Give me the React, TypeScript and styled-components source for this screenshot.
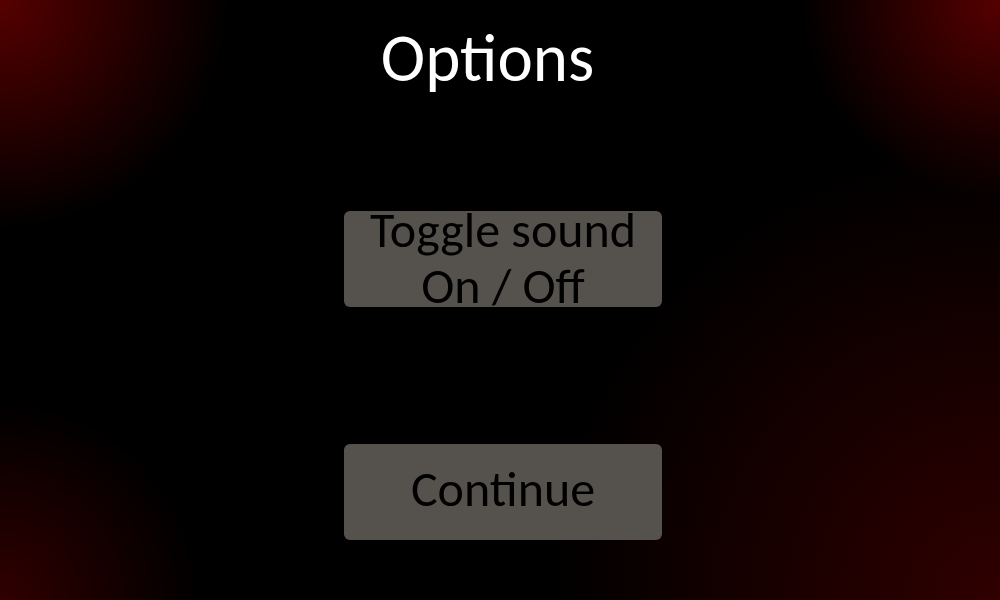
import React from 'react';
import styled, { createGlobalStyle } from 'styled-components';

const GlobalStyle = createGlobalStyle`
  html, body {
    margin: 0;
    padding: 0;
    height: 100%;
  }
  body {
    font-family: Carlito, Lato, "Open Sans", sans-serif;
  }
`;

const Screen = styled.div`
  width: 100vw;
  height: 100vh;
  overflow: hidden;
  background-color: #000;
  background-image:
    radial-gradient(circle at 0 0, #560000 0, rgba(86, 0, 0, 0) 230px),
    radial-gradient(circle at 100% 0, #560000 0, rgba(86, 0, 0, 0) 200px),
    radial-gradient(circle at 0 100%, #300000 0, rgba(48, 0, 0, 0) 200px),
    radial-gradient(circle at 100% 100%, #300000 0, rgba(48, 0, 0, 0) 460px);
  display: flex;
  flex-direction: column;
  align-items: center;
`;

const Title = styled.h1`
  margin: 20px 25px 0 0;
  font-size: 67px;
  font-weight: 400;
  line-height: 76px;
  color: #fff;
`;

const Menu = styled.div`
  margin-top: 115px;
  margin-left: 6px;
  display: flex;
  flex-direction: column;
  gap: 137px;
`;

const MenuButton = styled.button<{ $lift: number }>`
  box-sizing: border-box;
  width: 318px;
  height: 96px;
  border: none;
  border-radius: 6px;
  background: #55524d;
  color: #000;
  font-family: inherit;
  font-size: 50px;
  line-height: 56px;
  padding: 0 0 ${(p) => p.$lift}px;
  display: flex;
  align-items: center;
  justify-content: center;
  text-align: center;
  cursor: pointer;
  overflow: visible;
  white-space: nowrap;
`;

export default function App() {
  return (
    <>
      <GlobalStyle />
      <Screen>
        <Title>Options</Title>
        <Menu>
          <MenuButton $lift={2}>
            Toggle sound
            <br />
            On / Off
          </MenuButton>
          <MenuButton $lift={6}>Continue</MenuButton>
        </Menu>
      </Screen>
    </>
  );
}
